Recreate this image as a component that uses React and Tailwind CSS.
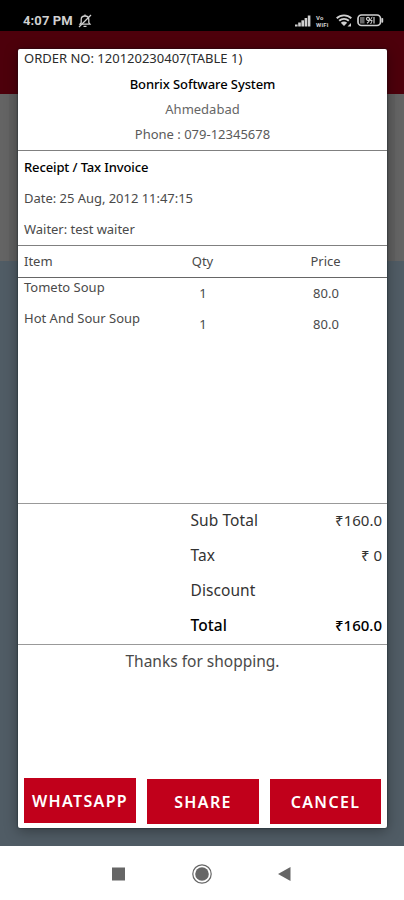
const items = [
  { name: 'Tometo Soup', qty: 1, price: '80.0' },
  { name: 'Hot And Sour Soup', qty: 1, price: '80.0' },
];

const totals = [
  { label: 'Sub Total', value: '₹160.0' },
  { label: 'Tax', value: '₹ 0' },
  { label: 'Discount', value: '' },
  { label: 'Total', value: '₹160.0', strong: true },
];

function StatusBar() {
  return (
    <div className="flex h-[31px] shrink-0 items-center bg-black pt-[10px] pr-[20px] pl-[23px] text-[#d0d0d0]">
      <span className="font-['Roboto'] text-[13px] leading-[20px] font-bold tracking-[0.1px] whitespace-nowrap">4:07 PM</span>
      {/* Muted bell */}
      <svg className="ml-[5px]" width="14" height="14" viewBox="0 0 14 14" fill="none" stroke="currentColor" strokeWidth="1.3">
        <path d="M2 10.200h10L10.800 8.500V5.500C10.800 3.300 9.200 2 7 2S3.200 3.300 3.200 5.500v3z" />
        <path d="M5.500 12.300h3M7 .5v1.500M1 13L13 1" />
      </svg>
      <div className="ml-auto flex items-center">
        {/* Signal */}
        <svg width="16" height="12" viewBox="0 0 16 12" fill="currentColor">
          <rect x="0" y="9.500" width="2.600" height="2" />
          <rect x="3.200" y="7.500" width="2.600" height="4" />
          <rect x="6.400" y="5.300" width="2.600" height="6.200" />
          <rect x="9.600" y="3" width="2.600" height="8.500" />
          <rect x="12.800" y=".5" width="2.600" height="11" />
        </svg>
        <div className="ml-[5px] flex w-[15px] flex-col font-['Roboto'] text-[6px] leading-[7px] font-bold tracking-[0.2px]">
          <span>Vo</span>
          <span>WiFi</span>
        </div>
        {/* Wifi */}
        <svg className="ml-[5px]" width="16" height="13" viewBox="0 0 16 13" fill="none" stroke="currentColor" strokeWidth="1.9">
          <path d="M.7 4.300C4.800.4 11.200.4 15.300 4.300" />
          <path d="M3.200 6.800c2.700-2.600 6.900-2.600 9.600 0" />
          <path d="M4.800 8.700c1.800-1.700 4.600-1.700 6.400 0L8 12z" fill="currentColor" stroke="none" />
          <path d="M15 9v3.500h-3.500z" fill="currentColor" stroke="none" />
        </svg>
        {/* Battery */}
        <svg className="ml-[5px]" width="27" height="13" viewBox="0 0 27 13" fill="none" stroke="currentColor">
          <rect x="1" y="1" width="22.500" height="10.500" rx="3.500" strokeWidth="1.700" />
          <path d="M25.300 4.800v3" strokeWidth="1.800" strokeLinecap="round" />
          <rect x="3" y="3" width="4.500" height="6.500" fill="#666" stroke="none" />
          <path d="M12.300 6.300c-3.500.8-3.500-3 -1.300-3 2.200 0 2 4.500-1 6M17 3v6.500" strokeWidth="1.200" />
          <path d="M15.200 2.800l-2 3.700h2l-1.500 3.500" strokeWidth="1" />
        </svg>
      </div>
    </div>
  );
}

function ActionButton({ label, className }) {
  return (
    <button className={`flex h-[45px] items-center justify-center bg-[#c1001b] pt-px text-[16px] font-semibold tracking-[1.35px] whitespace-nowrap text-white ${className}`}>
      {label}
    </button>
  );
}

function Receipt() {
  return (
    <div className="flex h-[779px] w-full flex-col overflow-hidden rounded-[2px] bg-white text-[13px] whitespace-nowrap text-[#4a4a4a] shadow-[0_3px_14px_rgba(0,0,0,0.35),0_0_2px_rgba(0,25,35,0.8)]">
      <div className="flex h-[102px] flex-col border-b border-[#808080] text-center">
        <p className="h-[22px] pl-[6px] text-left leading-[19px] text-[#2b2b2b]">ORDER NO: 120120230407(TABLE 1)</p>
        <p className="h-[26px] leading-[26px] font-medium tracking-[-0.1px] text-black">Bonrix Software System</p>
        <p className="h-[25px] leading-[25px] text-[#666]">Ahmedabad</p>
        <p className="h-[25px] leading-[25px] text-[#5a5a5a]">Phone : 079-12345678</p>
      </div>

      <div className="h-[95px] border-b border-[#808080] pt-px pl-[6px] leading-[31px]">
        <p className="font-medium tracking-[-0.12px] text-black">Receipt / Tax Invoice</p>
        <p className="tracking-[-0.03px]">Date: 25 Aug, 2012 11:47:15</p>
        <p className="tracking-[-0.03px]">Waiter: test waiter</p>
      </div>

      <div className="grid h-[32px] grid-cols-3 border-b border-[#666] leading-[30px]">
        <span className="pl-[6px]">Item</span>
        <span className="text-center">Qty</span>
        <span className="text-center">Price</span>
      </div>

      <div className="h-[226px] border-b border-[#999]">
        {items.map((item) => (
          <div key={item.name} className="grid h-[31px] grid-cols-3">
            <span className="pl-[6px] leading-[18px]">{item.name}</span>
            <span className="pl-px text-center leading-[31px]">{item.qty}</span>
            <span className="pl-px text-center leading-[31px]">{item.price}</span>
          </div>
        ))}
      </div>

      <div className="h-[141px] border-b border-[#999] pr-[5px] pl-[172.500px]">
        {totals.map((row) => (
          <div key={row.label} className={`flex h-[35px] justify-between leading-[33px] ${row.strong ? 'font-medium text-black' : 'text-[#333]'}`}>
            <span className="text-[15.500px] tracking-[0.08px]">{row.label}</span>
            <span className="text-[15px]">{row.value}</span>
          </div>
        ))}
      </div>

      <p className="text-center text-[15.500px] leading-[33px]">Thanks for shopping.</p>

      <div className="mt-auto flex justify-between px-[6px] pb-[4px]">
        <ActionButton label="WHATSAPP" className="-mt-px mb-px w-[112px]" />
        <ActionButton label="SHARE" className="w-[112px]" />
        <ActionButton label="CANCEL" className="w-[111px]" />
      </div>
    </div>
  );
}

function NavBar() {
  return (
    <div className="flex h-[54px] shrink-0 items-center justify-center gap-[64px] bg-white pt-px text-[#666]">
      <svg width="20" height="20" viewBox="0 0 20 20" fill="currentColor">
        <rect x="4" y="3.500" width="13" height="13" />
      </svg>
      <svg width="20" height="20" viewBox="0 0 20 20">
        <circle cx="10" cy="10" r="9.200" fill="none" stroke="currentColor" strokeWidth="1.200" />
        <circle cx="10" cy="10" r="6.800" fill="currentColor" />
      </svg>
      <svg width="20" height="20" viewBox="0 0 20 20" fill="currentColor">
        <path d="M2 10L14.500 3v14z" />
      </svg>
    </div>
  );
}

export default function App() {
  return (
    <div className="relative flex h-[900px] w-[404px] flex-col overflow-hidden font-['Noto_Sans',sans-serif]">
      <StatusBar />
      <div className="h-[63px] shrink-0 bg-[#4d000b]" />
      <div className="h-[167px] shrink-0 bg-[#646464] px-[9px]">
        <div className="h-full bg-[#606060]" />
      </div>
      <div className="flex-1 bg-[#505c65]" />
      <NavBar />
      {/* Receipt dialog over the dimmed screen */}
      <div className="absolute inset-x-0 top-[49px] pr-[17px] pl-[18px]">
        <Receipt />
      </div>
    </div>
  );
}
